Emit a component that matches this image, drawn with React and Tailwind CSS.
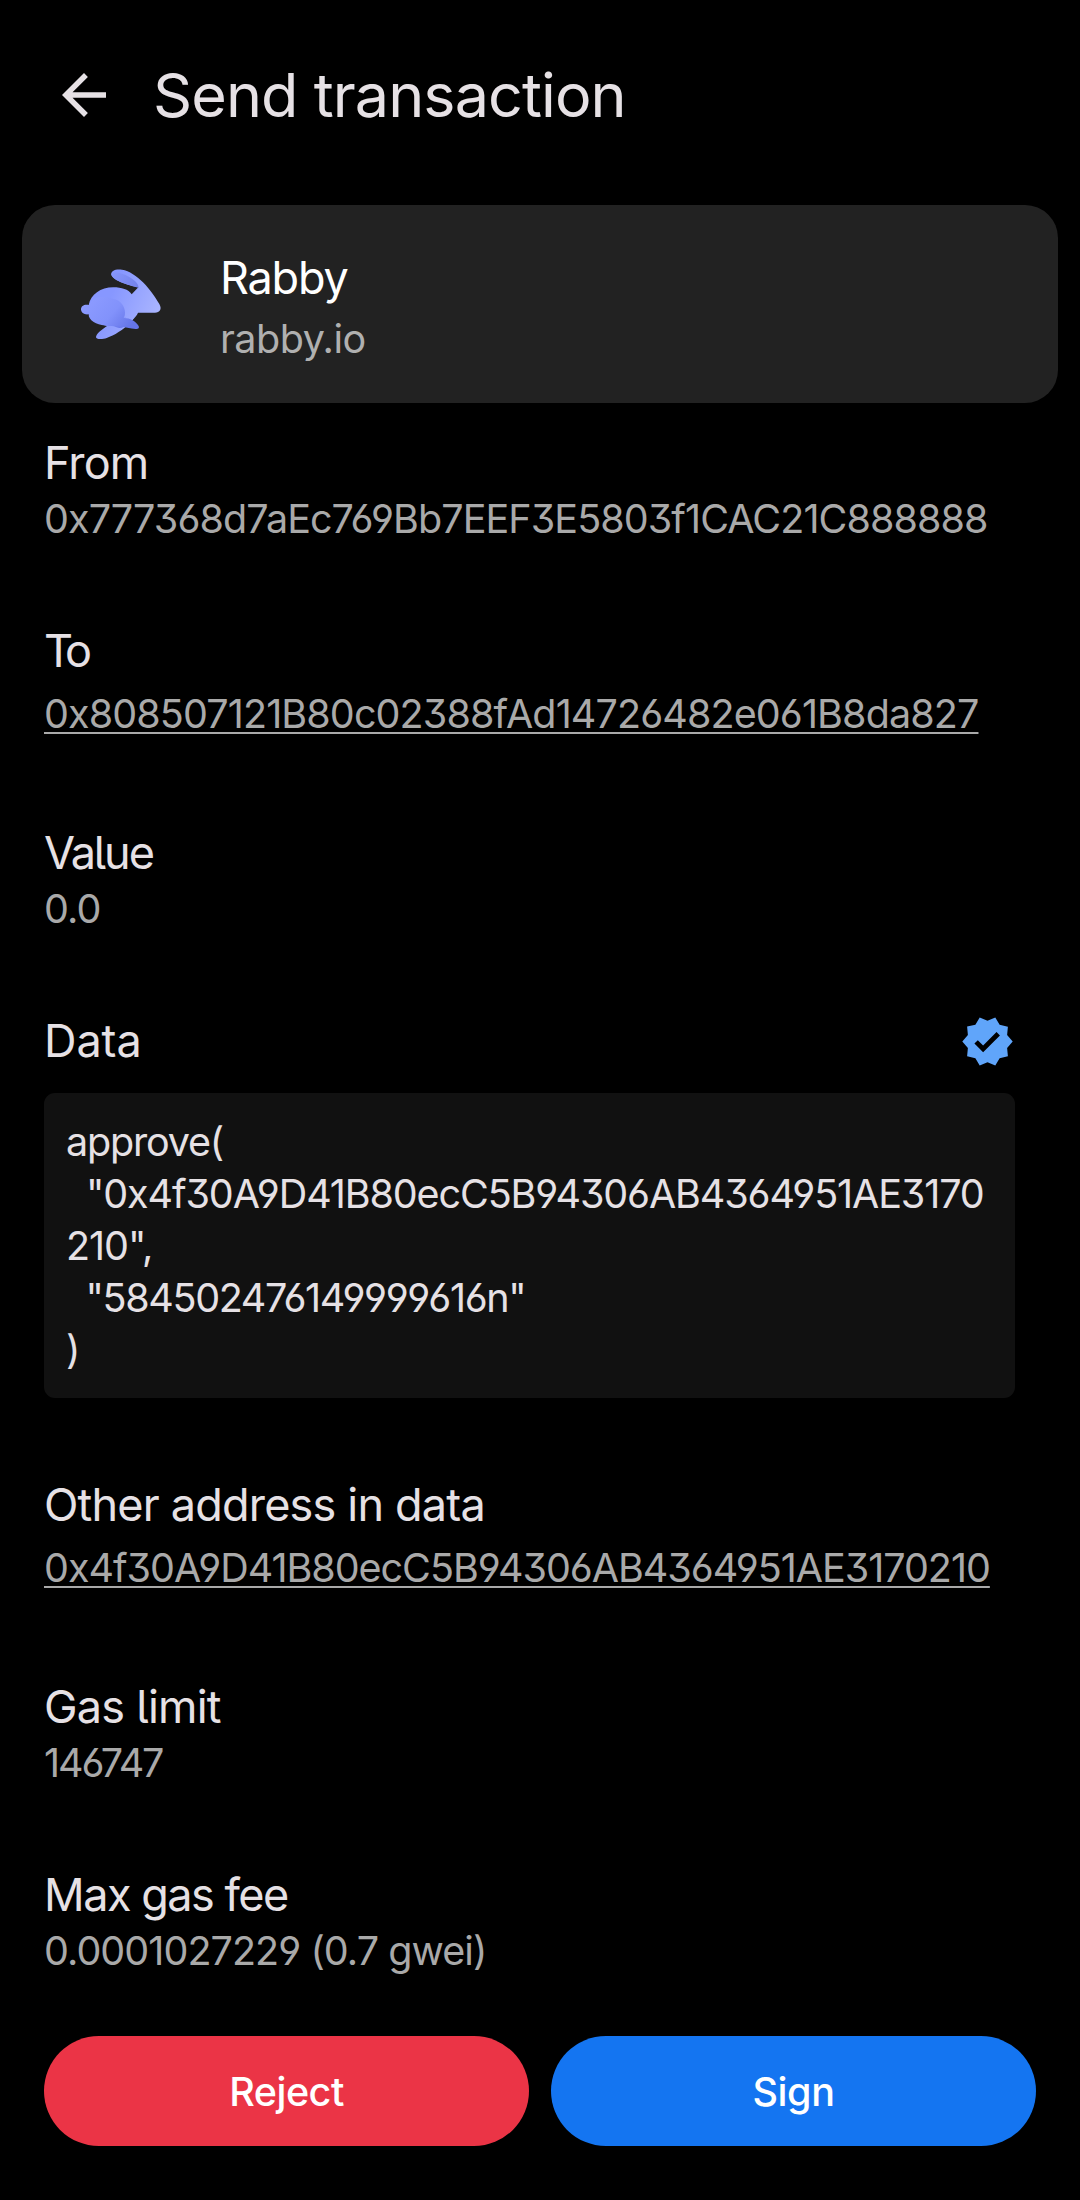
function BackArrow() {
  return (
    <svg className="ml-[51px] size-[66px] shrink-0" viewBox="0 0 24 24" fill="#e6e1e5">
      <path d="M20 11H7.83l5.59-5.59L12 4l-8 8 8 8 1.41-1.41L7.83 13H20v-2z" />
    </svg>
  );
}

function VerifiedBadge() {
  return (
    <svg className="size-[55px]" viewBox="0 0 24 24" fill="#60a5fa">
      <path d="M23 12l-2.44-2.79.34-3.69-3.61-.82-1.89-3.2L12 2.96 8.6 1.5 6.71 4.69 3.1 5.5l.34 3.7L1 12l2.44 2.79-.34 3.7 3.61.82L8.6 22.5l3.4-1.47 3.4 1.46 1.89-3.19 3.61-.82-.34-3.69L23 12zm-12.91 4.72l-3.8-3.81 1.48-1.48 2.32 2.33 5.85-5.87 1.48 1.48-7.33 7.35z" />
    </svg>
  );
}

function RabbyLogo() {
  return (
    <svg className="mt-[45px] ml-[38px] h-[100px] w-[120px] shrink-0" viewBox="0 0 360 300">
      <defs>
        <linearGradient id="head" x1="160" y1="120" x2="300" y2="180" gradientUnits="userSpaceOnUse">
          <stop offset="0" stopColor="#8797ff" />
          <stop offset="1" stopColor="#aab5ff" />
        </linearGradient>
        <linearGradient id="haunch" x1="95" y1="140" x2="205" y2="235" gradientUnits="userSpaceOnUse">
          <stop offset="0" stopColor="#8c9bff" />
          <stop offset="0.55" stopColor="#8292fb" />
          <stop offset="1" stopColor="#6575e8" />
        </linearGradient>
        <linearGradient id="ear" x1="155" y1="65" x2="240" y2="112" gradientUnits="userSpaceOnUse">
          <stop offset="0" stopColor="#8797fc" />
          <stop offset="1" stopColor="#7381ea" />
        </linearGradient>
      </defs>
      <path
        fill="url(#head)"
        d="M108 260C112 247 130 236 141 228L190 205L222 205L206 223C190 238 163 257 140 264C128 268 106 269 108 260Z"
      />
      <path
        fill="url(#head)"
        d="M86 166C92 133 122 112 160 112C185 112 205 118 215 133L235 112C205 106 160 92 154 75C151 62 168 56 186 59C230 66 275 120 298 162C307 178 299 188 285 188H234C231 196 224 203 218 209L190 230C150 235 85 225 86 166Z"
      />
      <path fill="url(#ear)" d="M154 72C162 63 185 68 208 81C224 90 236 102 236 113C202 105 156 91 154 72Z" />
      <path fill="#6979ed" d="M160 226L196 202L192 230C182 237 171 235 160 226Z" />
      <path
        fill="url(#haunch)"
        d="M160 147C181 149 195 169 195 188C195 196 193 200 191 204C207 203 229 214 236 228C239 235 234 238 227 237C210 235 190 229 176 230C150 230 118 226 101 216C90 209 86 202 86 193C73 195 63 188 63 178C63 167 74 162 87 165C96 142 128 132 160 147Z"
      />
    </svg>
  );
}

function Field({ label, labelClass, children }) {
  return (
    <section className="pb-[76px]">
      <h2 className={`text-[45px] leading-[58px] ${labelClass}`}>{label}</h2>
      {children}
    </section>
  );
}

function Value({ className, children }) {
  return <p className={`text-[39.5px] leading-[54px] text-[#a9a9a9] ${className}`}>{children}</p>;
}

function AddressLink({ className, children }) {
  return (
    <p className="my-[7px] text-[39.5px] leading-[54px] text-[#a9a9a9]">
      <a
        className={`underline decoration-[2px] underline-offset-[4px] [text-decoration-skip-ink:none] ${className}`}
      >
        {children}
      </a>
    </p>
  );
}

export default function App() {
  return (
    <div className="flex h-[2200px] w-[1080px] flex-col overflow-hidden bg-black whitespace-nowrap text-[#e6e1e5] font-['Inter','Liberation_Sans',sans-serif] [font-feature-settings:'cv03','cv04','cv05','cv09']">
      <header className="flex h-[190px] items-center">
        <BackArrow />
        <h1 className="ml-[36px] text-[61px] leading-[76px] tracking-[-0.9px]">Send transaction</h1>
      </header>

      <div className="mx-[22px] mt-[15px] flex h-[198px] items-start rounded-[33px] bg-[#222222]">
        <RabbyLogo />
        <div className="mt-[42px] ml-[40px]">
          <p className="text-[45px] leading-[62px] tracking-[-1.2px] text-white">Rabby</p>
          <p className="text-[39.5px] leading-[61px] tracking-[-0.5px] text-[#b0b0b0]">rabby.io</p>
        </div>
      </div>

      <main className="mt-[31px] mr-[65px] ml-[44px]">
        <Field label="From" labelClass="tracking-[-0.9px]">
          <Value className="tracking-[-0.92px]">0x777368d7aEc769Bb7EEF3E5803f1CAC21C888888</Value>
        </Field>
        <Field label="To" labelClass="tracking-[-4.5px]">
          <AddressLink className="tracking-[-0.88px]">0x808507121B80c02388fAd14726482e061B8da827</AddressLink>
        </Field>
        <Field label="Value" labelClass="tracking-[-2.1px]">
          <Value className="tracking-[-0.9px]">0.0</Value>
        </Field>
        <section className="pb-[78px]">
          <div className="flex h-[58px] items-center justify-between">
            <h2 className="text-[45px] leading-[58px] tracking-[-0.1px]">Data</h2>
            <VerifiedBadge />
          </div>
          <div className="mt-[23px] h-[305px] rounded-[11px] bg-[#111111] px-[22px] pt-[23px] text-[39.5px] leading-[52px] whitespace-pre">
            <div className="tracking-[-1.2px]">approve(</div>
            <div className="tracking-[-1.11px]">{'  "0x4f30A9D41B80ecC5B94306AB4364951AE3170'}</div>
            <div className="tracking-[-1.05px]">{'210",'}</div>
            <div className="tracking-[-1.35px]">{'  "584502476149999616n"'}</div>
            <div>)</div>
          </div>
        </section>
        <Field label="Other address in data" labelClass="tracking-[-0.8px]">
          <AddressLink className="tracking-[-1.02px]">0x4f30A9D41B80ecC5B94306AB4364951AE3170210</AddressLink>
        </Field>
        <Field label="Gas limit" labelClass="tracking-[-0.75px]">
          <Value className="tracking-[-2.1px]">146747</Value>
        </Field>
        <Field label="Max gas fee" labelClass="tracking-[-1.5px]">
          <Value className="tracking-[-0.95px]">0.0001027229 (0.7 gwei)</Value>
        </Field>
      </main>

      <footer className="-mt-[18px] mr-[44px] ml-[44px] grid h-[110px] shrink-0 grid-cols-2 gap-[22px] text-[39.5px] font-[450] text-white">
        <button className="rounded-full bg-[#eb3446] pt-[2px] leading-[54px] tracking-[-0.5px]">Reject</button>
        <button className="rounded-full bg-[#1475f1] pt-[2px] leading-[54px] tracking-[-0.4px]">Sign</button>
      </footer>
    </div>
  );
}
